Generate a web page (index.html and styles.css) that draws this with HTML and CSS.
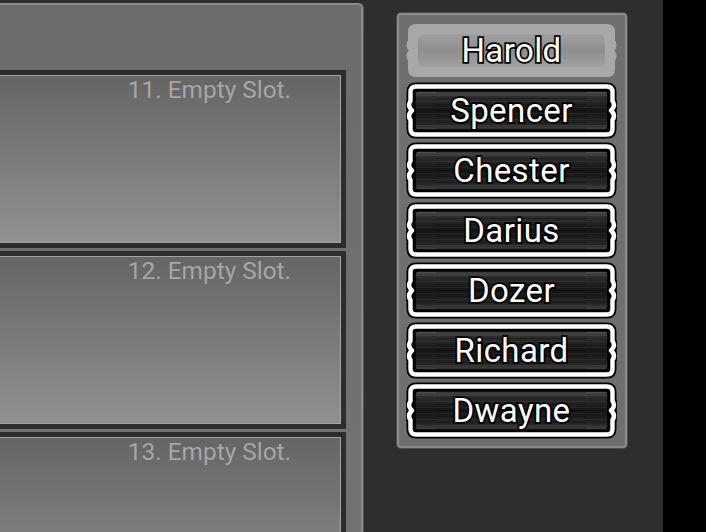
FILE: index.html
```html
<!DOCTYPE html>
<html lang="en">
<head>
  <meta charset="UTF-8">
  <title>Squad Select</title>
  <link rel="stylesheet" href="styles.css">
</head>
<body>

  <!-- shared button frames -->
  <svg class="defs" width="0" height="0">
    <defs>
      <linearGradient id="darkFill" x1="0" y1="0" x2="0" y2="1">
        <stop offset="0" stop-color="#555"/>
        <stop offset="0.14" stop-color="#2e2e2e"/>
        <stop offset="0.5" stop-color="#141414"/>
        <stop offset="0.86" stop-color="#262626"/>
        <stop offset="1" stop-color="#484848"/>
      </linearGradient>
      <linearGradient id="lightBand" x1="0" y1="0" x2="0" y2="1">
        <stop offset="0" stop-color="#a0a0a0"/>
        <stop offset="0.5" stop-color="#8e8e8e"/>
        <stop offset="1" stop-color="#a0a0a0"/>
      </linearGradient>
      <pattern id="streaks" width="211" height="6" patternUnits="userSpaceOnUse">
        <rect x="0" y="1" width="211" height="1" fill="#fff" opacity="0.05"/>
        <rect x="30" y="4" width="150" height="1" fill="#000" opacity="0.25"/>
      </pattern>
      <path id="shape" d="M10 4.5 H201 Q206.5 4.5 206.5 10 V19 Q210 24 205 28.5 Q210 33 206.5 38 V47 Q206.5 52.5 201 52.5 H10 Q4.5 52.5 4.5 47 V38 Q1 33 6 28.5 Q1 24 4.5 19 V10 Q4.5 4.5 10 4.5 Z"/>
      <symbol id="frameDark" viewBox="0 0 211 57">
        <use href="#shape" fill="#000" stroke="#000" stroke-width="8"/>
        <use href="#shape" fill="none" stroke="#fff" stroke-width="4.4"/>
        <rect x="9" y="9" width="193" height="39" rx="3" fill="url(#darkFill)" stroke="#000" stroke-width="1.5"/>
        <rect x="10" y="10" width="191" height="37" fill="url(#streaks)"/>
      </symbol>
      <symbol id="frameLight" viewBox="0 0 211 57">
        <use href="#shape" fill="#a8a8a8" stroke="#a8a8a8" stroke-width="5"/>
        <rect x="12" y="12" width="187" height="33" rx="6" fill="url(#lightBand)"/>
      </symbol>
    </defs>
  </svg>

  <div class="screen">
    <div class="stage">

      <section class="slots-panel">
        <div class="slot"><div class="slot-label">11. Empty Slot.</div></div>
        <div class="slot"><div class="slot-label">12. Empty Slot.</div></div>
        <div class="slot"><div class="slot-label">13. Empty Slot.</div></div>
      </section>

      <aside class="roster">
        <div class="name-btn active">
          <svg class="frame" viewBox="0 0 211 57"><use href="#frameLight"/></svg>
          <span>Harold</span>
        </div>
        <div class="name-btn">
          <svg class="frame" viewBox="0 0 211 57"><use href="#frameDark"/></svg>
          <span>Spencer</span>
        </div>
        <div class="name-btn">
          <svg class="frame" viewBox="0 0 211 57"><use href="#frameDark"/></svg>
          <span>Chester</span>
        </div>
        <div class="name-btn">
          <svg class="frame" viewBox="0 0 211 57"><use href="#frameDark"/></svg>
          <span>Darius</span>
        </div>
        <div class="name-btn">
          <svg class="frame" viewBox="0 0 211 57"><use href="#frameDark"/></svg>
          <span>Dozer</span>
        </div>
        <div class="name-btn">
          <svg class="frame" viewBox="0 0 211 57"><use href="#frameDark"/></svg>
          <span>Richard</span>
        </div>
        <div class="name-btn">
          <svg class="frame" viewBox="0 0 211 57"><use href="#frameDark"/></svg>
          <span>Dwayne</span>
        </div>
      </aside>

    </div>
    <div class="edge"></div>
  </div>

</body>
</html>
```

FILE: styles.css
```css
body {
  margin: 0;
  font-family: 'Roboto', 'Liberation Sans', sans-serif;
  background: #000;
  overflow: hidden;
}

.defs {
  display: block;
  width: 0;
  height: 0;
  overflow: hidden;
}

.screen {
  display: flex;
  width: 706px;
  height: 532px;
  overflow: hidden;
}

.stage {
  display: flex;
  align-items: flex-start;
  width: 663px;
  height: 532px;
  background: #2e2e2e;
  overflow: hidden;
}

.edge {
  flex: 1;
  background: #000;
}

/* left panel with the empty slots */
.slots-panel {
  flex: none;
  box-sizing: border-box;
  width: 403px;
  height: 620px;
  margin-left: -40px;
  margin-top: 3px;
  padding: 65px 15px 0 0;
  border: 2px solid #8b8b8b;
  border-bottom: none;
  border-radius: 5px 5px 0 0;
  box-shadow: 1px 0 0 #5a5a5a;
  background: linear-gradient(#6c6c6c, #747474);
  display: flex;
  flex-direction: column;
  gap: 3px;
}

.slot {
  flex: none;
  box-sizing: border-box;
  height: 178px;
  border: 5px solid #2d2d2d;
  box-shadow: inset 0 0 0 1px #a3a3a3;
  background: linear-gradient(#656565, #919191);
}

.slot-label {
  padding: 3px 50px 0 0;
  text-align: right;
  font-size: 24.4px;
  line-height: 24px;
  color: #a6a6a6;
}

/* right roster list */
.roster {
  flex: none;
  box-sizing: border-box;
  width: 230px;
  margin-left: 34px;
  margin-top: 13px;
  padding: 7px 8px 7px 7px;
  border: 2px solid #8a8a8a;
  border-radius: 4px;
  box-shadow: 0 0 0 1px #4c4c4c;
  background: #6f6f6f;
  display: flex;
  flex-direction: column;
  gap: 3px;
}

.name-btn {
  position: relative;
  height: 57px;
  display: flex;
  align-items: center;
  justify-content: center;
}

.name-btn .frame {
  position: absolute;
  left: 0;
  top: 0;
  width: 100%;
  height: 100%;
}

.name-btn span {
  position: relative;
  font-size: 33px;
  line-height: 57px;
  letter-spacing: 0.4px;
  color: #fff;
  -webkit-text-stroke: 3.5px #000;
  paint-order: stroke fill;
}
```
